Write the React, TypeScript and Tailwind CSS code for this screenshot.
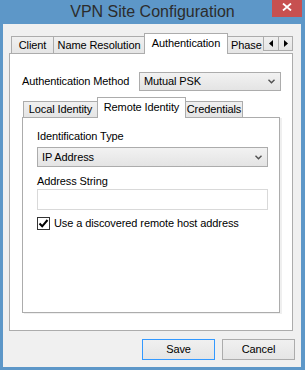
import type { ReactNode } from 'react';

const ui = "font-['Liberation_Sans',Arial,sans-serif] text-[11px] tracking-[-0.1px] text-black";

function Chevron() {
  return (
    <svg width="7" height="5" viewBox="0 0 7 5" className="shrink-0">
      <path d="M0.5 0.8 L3.5 3.8 L6.5 0.8" fill="none" stroke="#505050" strokeWidth={1.4} />
    </svg>
  );
}

function Combo({ value, className = '' }: { value: string; className?: string }) {
  return (
    <div
      className={`flex items-center justify-between border border-[#acacac] bg-linear-to-b from-[#f2f2f2] to-[#e4e4e4] pl-[4px] pr-[5px] ${className}`}
    >
      <span>{value}</span>
      <Chevron />
    </div>
  );
}

type TabProps = {
  children: ReactNode;
  active?: boolean;
  className?: string;
};

function Tab({ children, active = false, className = '' }: TabProps) {
  if (active) {
    return (
      <div
        className={`relative z-10 -mb-px flex items-center justify-center border-x border-t border-[#acacac] bg-white ${className}`}
      >
        {children}
      </div>
    );
  }
  return (
    <div
      className={`flex items-center justify-center whitespace-nowrap border-t border-[#acacac] bg-linear-to-b from-[#f0f0f0] to-[#e5e5e5] ${className}`}
    >
      {children}
    </div>
  );
}

function ArrowButton({ dir, className = '' }: { dir: 'left' | 'right'; className?: string }) {
  return (
    <div
      className={`flex h-[15px] items-center justify-center border border-[#acacac] bg-linear-to-b from-[#f0f0f0] to-[#e5e5e5] ${className}`}
    >
      <svg width="4" height="7" viewBox="0 0 4 7">
        {dir === 'left' ? <path d="M4 0 L0 3.5 L4 7 Z" fill="#000" /> : <path d="M0 0 L4 3.5 L0 7 Z" fill="#000" />}
      </svg>
    </div>
  );
}

function Button({ label, focused = false }: { label: string; focused?: boolean }) {
  return (
    <div
      className={`flex h-[21px] w-[73px] items-center justify-center border bg-linear-to-b from-[#f0f0f0] to-[#e5e5e5] ${
        focused ? 'border-[#3399ff]' : 'border-[#acacac]'
      }`}
    >
      {label}
    </div>
  );
}

export default function App() {
  return (
    <div className={`flex h-[370px] w-[305px] flex-col bg-[#5d97c8] ${ui}`}>
      {/* title bar */}
      <div className="relative flex h-[24px] shrink-0 items-center justify-center">
        <span className="text-[16px] leading-[24px] tracking-normal text-[#2c2c2c]">VPN Site Configuration</span>
        <div className="absolute right-[3px] top-0 flex h-[17px] w-[30px] justify-center bg-[#c75050] pt-[3px]">
          <svg width="10" height="8" viewBox="0 0 10 8">
            <path d="M1 0.5 L9 7.5 M9 0.5 L1 7.5" stroke="#fff" strokeWidth={1.8} />
          </svg>
        </div>
      </div>

      {/* client area */}
      <div className="ml-[3px] flex h-[343px] w-[298px] flex-col bg-[#f0f0f0]">
        {/* outer tabs */}
        <div className="ml-[6px] mr-[8px] flex h-[29px] items-end pl-[2px]">
          <Tab className="h-[17px] w-[42px] border-l">Client</Tab>
          <Tab className="h-[17px] w-[91px] border-l">Name Resolution</Tab>
          <Tab active className="h-[21px] w-[84px]">
            <span className="pb-px">Authentication</span>
          </Tab>
          <Tab className="h-[17px] w-[35px] justify-start! overflow-hidden pl-[3px]">Phase</Tab>
          <div className="mb-[2px] flex self-end">
            <ArrowButton dir="left" className="w-[16px]" />
            <ArrowButton dir="right" className="-ml-px w-[15px]" />
          </div>
        </div>

        <div className="ml-[6px] mr-[8px] flex h-[278px] flex-col border border-[#acacac] bg-white pl-[12px] pr-[11px] pt-[18px]">
          <div className="flex h-[19px] items-center">
            <span>Authentication Method</span>
            <Combo value="Mutual PSK" className="ml-auto h-[19px] w-[142px]" />
          </div>

          {/* inner tabs */}
          <div className="mt-[6px] flex h-[20px] items-end pl-px">
            <Tab className="h-[16px] w-[74px] border-l">Local Identity</Tab>
            <Tab active className="h-[21px] w-[89px]">
              <span className="pb-[2px]">Remote Identity</span>
            </Tab>
            <Tab className="h-[16px] w-[57px] border-r">Credentials</Tab>
          </div>

          <div className="flex h-[196px] w-[258px] flex-col border border-[#acacac] bg-white pl-[14px] pt-[11px] shadow-[2px_1px_0_0_#efefef]">
            <span className="leading-[15px]">Identification Type</span>
            <Combo value="IP Address" className="mt-[3px] h-[20px] w-[231px]" />
            <span className="mt-[7px] leading-[15px]">Address String</span>
            <div className="h-[21px] w-[231px] border border-[#d9d9d9] bg-white" />
            <div className="mt-[7px] flex h-[13px] items-center gap-[4px]">
              <div className="flex h-[13px] w-[13px] items-center justify-center border border-[#333] bg-white">
                <svg width="11" height="11" viewBox="0 0 11 11">
                  <path d="M1.5 5.5 L4.2 8.3 L9.5 2" fill="none" stroke="#000" strokeWidth={2} />
                </svg>
              </div>
              <span>Use a discovered remote host address</span>
            </div>
          </div>
        </div>

        {/* dialog buttons */}
        <div className="mt-[8px] flex justify-end gap-[7px] pr-[6px]">
          <Button label="Save" focused />
          <Button label="Cancel" />
        </div>
      </div>
    </div>
  );
}
